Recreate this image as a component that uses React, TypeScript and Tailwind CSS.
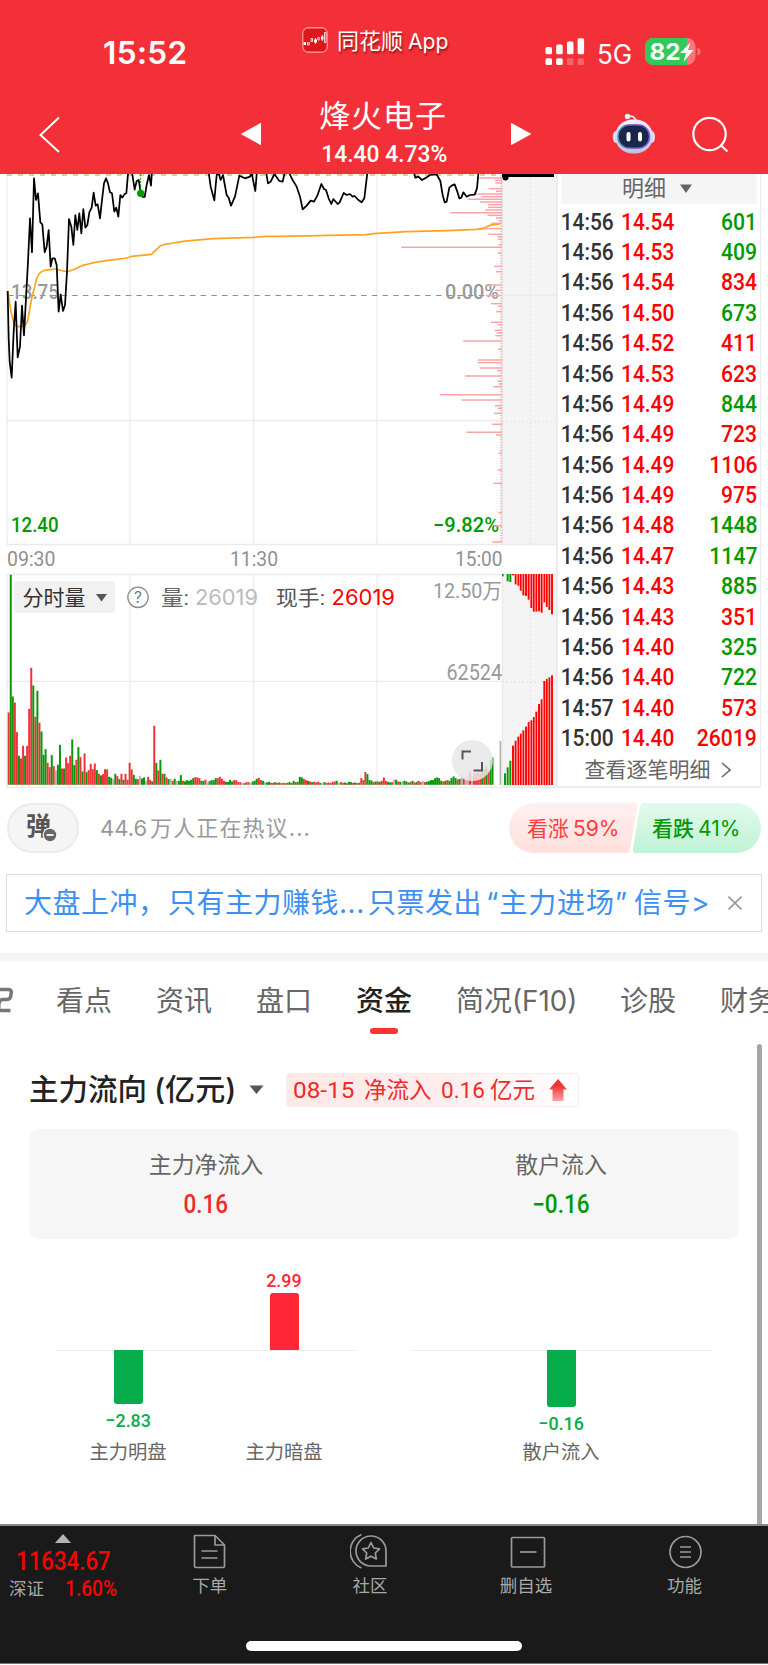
import React from "react";

const RED = "#ff0000";
const GREEN = "#009900";

const priceSegments: string[] = [
  "23,378 26,520 29,590 35,638 41,500 47,410 53,577 60,545 66,422 72,511 78,400 84,290 90,160 96,262 102,40 108,105 114,85 121,172 127,178 134,262 140,245 146,195 152,305 157,280 164,280 170,300 176,440 182,388 189,438 195,420 201,320 207,162 214,185 220,240 226,150 232,195 238,145 244,205 250,132 256,188 262,180 268,142 275,128 281,83 287,122 293,118 300,160 306,105 312,55 318,40 324,55 330,82 336,85 343,140 349,128 355,155 361,90 367,98 373,88 379,85 385,15",
  "395,15 404,74 410,48 416,45 422,80 428,96 434,96 440,60 447,30 453,62 456,15",
  "625,15 632,65 643,106 650,30 656,25 662,45 669,30 680,90 686,98 693,122 705,95 718,32 735,40 750,35 755,25 766,78 771,15",
  "798,20 804,55 812,50 822,30 827,20",
  "824,28 838,48 848,50 855,20",
  "866,20 876,42 890,65 900,95 908,133 920,122 932,107 942,110 952,92 964,57 972,72 978,75 986,100 994,117 1000,102 1013,117 1019,112 1031,84 1040,90 1050,87 1058,95 1064,93 1075,105 1085,112 1093,100 1103,15",
  "1241,20 1246,38 1255,35 1266,45 1278,38 1290,30 1310,28 1321,48 1328,90 1334,112 1340,110 1348,68 1355,62 1364,58 1372,80 1378,100 1384,98 1390,82 1400,95 1410,90 1424,89 1431,70 1436,15",
];

const averageLine =
  "23,378 33,440 42,478 55,485 75,483 83,467 95,400 103,370 110,340 118,325 130,317 150,314 165,312 190,318 203,320 225,312 245,302 265,297 285,292 320,287 350,283 380,279 395,274 455,268 460,262 470,253 480,243 495,238 520,234 550,229 580,226 640,221 760,217 800,214 840,214 1100,209 1120,206 1220,200 1340,197 1430,193 1450,190 1470,181 1480,179 1500,177";

const chips: [number, number][] = [
  [39, 628], [46, 675], [54, 676], [71, 656], [79, 678], [87, 615], [95, 634], [103, 595], [111, 630], [119, 654],
  [127, 654], [135, 646], [143, 541], [151, 652], [159, 678], [167, 686], [175, 664], [191, 628], [208, 655], [215, 682],
  [223, 684], [239, 686], [247, 394], [264, 684], [304, 672], [320, 678], [360, 650], [376, 675], [392, 648], [416, 663],
  [424, 684], [440, 679], [472, 663], [480, 684], [496, 674], [504, 680], [512, 676], [528, 580], [553, 685], [585, 624],
  [593, 624], [609, 629], [617, 681], [633, 585], [649, 682], [657, 686], [665, 670], [689, 509], [705, 575], [722, 675],
  [730, 682], [745, 672], [778, 667], [802, 589], [810, 678], [857, 690], [865, 686], [915, 683], [955, 670], [1043, 685],
  [1083, 672], [1131, 667],
];

const volumes =
  "r217 g630 g265 r247 r158 g87 r79 r117 g87 r117 r228 r351 g298 r204 g282 r186 g160 g90 g107 r66 r53 g89 r56 a43 g60 g120 r49 g49 r82 r65 r87 g136 g59 r75 g113 r83 g40 r94 g38 r44 r63 r47 r64 g44 r33 g28 r32 r47 r46 g24 g21 a17 g33 r26 g17 r33 g15 r33 r15 r66 r46 g30 g18 r17 a27 g19 g22 a12 r24 r15 g10 r177 g66 r43 g75 r33 g33 r22 g17 a18 r12 g18 a12 g12 g29 r12 g10 g14 g12 g15 g20 r23 r22 r20 g12 g12 r15 a8 g11 g14 g14 g20 r20 r24 r18 r12 g9 g9 g15 g10 r14 r14 r8 r8 a6 g5 r8 r8 a5 g10 g12 g18 r21 r14 g12 a8 g7 g9 r6 r6 g8 r6 g7 r5 r6 r5 g6 g8 r6 g12 g8 r9 g24 g22 r18 r14 g12 r10 g8 r9 r7 r9 g6 a5 g8 r6 r7 g5 r9 r10 g12 a6 r8 r6 g7 r5 g9 g8 r6 g7 r5 g6 r20 r14 r38 g32 g14 g13 r8 g10 r10 g9 r12 r22 r12 g9 g7 r8 a16 g15 r10 g9 a10 g12 g10 g7 r9 g12 r7 g9 r12 r8 a12 r8 g9 g11 g14 g14 g20 g22 g20 g12 r10 g12 r14 g12 g20 g25 g20 r16 g18 a32 r22 a18 a28 r40 a25 r36 r34 r38 r34 g40 r48 g55 r42 g75 g82"
    .split(" ");

const fills: Record<string, string> = { r: "#f03338", g: "#0b960b", a: "#b3b3b3" };

const depthX = [645, 653, 661, 669, 677, 685, 692.5, 700, 708, 716, 724, 731.5, 739, 747, 755, 763, 770.5, 778, 786];
const depthLow = [700, 682, 662, 617, 602, 590, 581, 571, 560, 546, 541, 531, 515, 492, 478, 423, 417, 412, 406];
const depthHigh = [102, 124, 126, 106, 133, 137, 152, 166, 168, 179, 204, 215, 215, 214, 218, 187, 201, 210, 223];

const trades: [string, string, string, boolean][] = [
  ["14:56", "14.54", "601", false],
  ["14:56", "14.53", "409", false],
  ["14:56", "14.54", "834", true],
  ["14:56", "14.50", "673", false],
  ["14:56", "14.52", "411", true],
  ["14:56", "14.53", "623", true],
  ["14:56", "14.49", "844", false],
  ["14:56", "14.49", "723", true],
  ["14:56", "14.49", "1106", true],
  ["14:56", "14.49", "975", true],
  ["14:56", "14.48", "1448", false],
  ["14:56", "14.47", "1147", false],
  ["14:56", "14.43", "885", false],
  ["14:56", "14.43", "351", true],
  ["14:56", "14.40", "325", false],
  ["14:56", "14.40", "722", false],
  ["14:57", "14.40", "573", true],
  ["15:00", "14.40", "26019", true],
];

function Label({ x, y, w, size, fill, children, font = "Roboto", weight = 500 }: {
  x: number; y: number; w: number; size: number; fill: string; children: string; font?: string; weight?: number;
}) {
  return (
    <text x={x} y={y} textLength={w} lengthAdjust="spacingAndGlyphs" fontSize={size} fill={fill}
      fontFamily={`${font}, "Noto Sans CJK SC", sans-serif`} fontWeight={weight}>
      {children}
    </text>
  );
}

function Header() {
  return (
    <header className="flex h-[174px] flex-col bg-[#f33038] text-white">
      <div className="flex h-[92px] items-start">
        <div className="ml-[103px] mt-[38px] w-[199px] text-[31.500px] font-semibold leading-[30px] tracking-[0.400px]">15:52</div>
        <svg className="mt-[27px]" width="26" height="26" viewBox="0 0 26 26">
          <rect x="0.75" y="0.75" width="24.5" height="24.5" rx="5.5" fill="#e0161e" stroke="#ff8f92" strokeWidth="1.3" />
          <path d="M1.500 16.500h2.500M12 14h3M19 11h2.500" stroke="#fff" strokeWidth="3.200" />
          <path d="M5.500 15.500h1.800v2.500h-1.800zM9 11.500h1.500v3h-1.500zM15.800 10.500h1.500v2.500h-1.500zM22.500 5.500h1.500v10h-1.500zM13.500 11v6M20.300 8v6" stroke="#fff" strokeWidth="0.8" fill="none" />
        </svg>
        <div className="ml-[9px] mt-[29px] flex w-[208px] items-center gap-[5px] whitespace-nowrap text-[22px] leading-[24px] [text-shadow:1px_2px_2px_rgba(90,0,0,0.6)]">
          <span>同花顺</span><span className="origin-left scale-x-[0.960]">App</span>
        </div>
        <svg className="mt-[38px]" width="40" height="28" viewBox="0 0 40 28" fill="#fff">
          <rect x="0.5" y="9" width="6.500" height="7.300" rx="1.500" />
          <rect x="11.200" y="6.500" width="6.500" height="9.800" rx="1.500" />
          <rect x="22" y="3.500" width="6.500" height="12.800" rx="1.500" />
          <rect x="32.600" y="0.300" width="6.500" height="16" rx="1.500" />
          <rect x="0.500" y="20.200" width="6.500" height="6.800" rx="1.500" />
          <rect x="11.200" y="20.200" width="6.500" height="6.800" rx="1.500" />
          <rect x="22" y="20.200" width="6.500" height="6.800" rx="1.500" opacity="0.25" />
          <rect x="32.600" y="20.200" width="6.500" height="6.800" rx="1.500" opacity="0.25" />
        </svg>
        <div className="ml-[12px] mt-[40px] w-[48px] text-[26.500px] leading-[28px]"><span className="inline-block origin-left scale-x-[0.980]">5G</span></div>
        <svg className="mt-[38px]" width="56" height="27" viewBox="0 0 56 27">
          <clipPath id="battery"><rect width="50.500" height="27" rx="8.500" /></clipPath>
          <g clipPath="url(#battery)">
            <rect width="51" height="27" fill="#f9767b" />
            <rect width="42" height="27" fill="#34c759" />
          </g>
          <path d="M52.500 9.500q3 1 3 4t-3 4z" fill="#f9767b" />
          <text x="4.500" y="21.800" textLength="31" lengthAdjust="spacingAndGlyphs" fontFamily="Inter" fontWeight="700" fontSize="23.500" fill="#fff">82</text>
          <path d="M45.500 4.500L35 15h6l-2.500 9L48.500 12h-5.500z" fill="#fff" />
        </svg>
      </div>
      <div className="flex h-[82px] items-start">
        <svg className="ml-[38px] mt-[23px]" width="24" height="40" viewBox="0 0 24 40" fill="none" stroke="#fff" strokeWidth="2"><path d="M21 2.500L2.500 20L21 37" /></svg>
        <svg className="ml-[178px] mt-[30px]" width="22" height="24" viewBox="0 0 22 24"><path d="M0.800 12L21 0.800V23.200z" fill="#fff" /></svg>
        <div className="flex w-[247px] flex-col items-center">
          <div className="mt-[8px] whitespace-nowrap pr-[5px] text-[31px] leading-[32px] tracking-[0.900px]">烽火电子</div>
          <div className="mt-[9px] origin-center scale-x-[0.950] whitespace-nowrap pr-[2px] font-[Roboto] text-[24px] font-medium leading-[26px]">14.40 4.73%</div>
        </div>
        <svg className="ml-px mt-[30px]" width="22" height="24" viewBox="0 0 22 24"><path d="M21.500 12L1 0.800V23.200z" fill="#fff" /></svg>
        <svg className="ml-[79px] mt-[20px]" width="46" height="44" viewBox="0 0 46 44">
          <defs>
            <linearGradient id="shell" x1="0" y1="0" x2="0" y2="1"><stop offset="0" stopColor="#f1f3fb" /><stop offset="1" stopColor="#bcc3df" /></linearGradient>
            <linearGradient id="visor"><stop offset="0" stopColor="#4f95b8" /><stop offset="0.500" stopColor="#7b3fb8" /><stop offset="1" stopColor="#7c5cf0" /></linearGradient>
          </defs>
          <path d="M17 4.500q7-1.500 8 5" stroke="#dfe3f2" strokeWidth="1.800" fill="none" />
          <circle cx="16.500" cy="4.500" r="2.700" fill="#e9ecf7" />
          <ellipse cx="5" cy="25" rx="3.300" ry="6" fill="#dce0f0" />
          <ellipse cx="40.700" cy="25" rx="3.300" ry="6" fill="#dce0f0" />
          <rect x="4" y="7.500" width="38" height="34" rx="18" fill="url(#shell)" />
          <rect x="7" y="13" width="31.500" height="23" rx="11" fill="#19274a" stroke="url(#visor)" strokeWidth="1.500" />
          <rect x="15.500" y="20" width="4" height="9.500" rx="2" fill="#fff" />
          <rect x="27" y="20" width="4" height="9.500" rx="2" fill="#fff" />
        </svg>
        <svg className="ml-[34px] mt-[23px]" width="40" height="40" viewBox="0 0 40 40" fill="none" stroke="#fff" strokeWidth="2.200"><circle cx="18.500" cy="19" r="16.200" /><path d="M29.500 30l7 6.500" /></svg>
      </div>
    </header>
  );
}

function PriceChart() {
  return (
    <svg className="block" width="557" height="372" viewBox="0 174 557 372">
      <rect x="502.500" y="174" width="54.500" height="371" fill="#f4f4f4" />
      <g stroke="#ebebeb" strokeWidth="1.300" fill="none">
        <path d="M7 174V545M130 174V545M253.500 174V545M377 174V545M502.500 174V545M7 420.500H502M7 544.500H557M502 295.500H557" />
        <path d="M530.500 174V545M502 421.500H557" strokeDasharray="2 2" stroke="#e6e6e6" />
      </g>
      <path d="M7 175H502" stroke="#e0b878" strokeWidth="1.500" strokeDasharray="5 6" />
      <path d="M8 295.500H502" stroke="#8f8f8f" strokeWidth="1.100" strokeDasharray="5.500 5.200" />
      <Label x={11} y={299} w={48} size={20.500} fill="#999">13.75</Label>
      <Label x={445} y={299} w={54} size={20.500} fill="#999">0.00%</Label>
      <Label x={11} y={532} w={47.500} size={20.500} fill={GREEN}>12.40</Label>
      <Label x={433} y={532} w={66} size={20.500} fill={GREEN}>−9.82%</Label>
      <g transform="translate(270 165) scale(0.33333)" stroke="#f8a5a7" strokeWidth="4.500">
        {chips.map(([y, x]) => <path key={y} d={`M${x} ${y}H696`} />)}
        <path d="M694 30V1134" strokeDasharray="4 4" strokeWidth="5" />
      </g>
      <g transform="translate(0 165) scale(0.33333)" fill="none" strokeLinejoin="round">
        <polyline points={averageLine} stroke="#ffa21f" strokeWidth="5" />
        {priceSegments.map((p) => <polyline key={p} points={p} stroke="#000" strokeWidth="5.200" />)}
        <path d="M422 28V80" stroke={GREEN} strokeWidth="3" strokeDasharray="6 4" />
        <circle cx="422" cy="85" r="11" fill={GREEN} />
      </g>
      <path d="M502 175.500H554" stroke="#000" strokeWidth="3" />
      <circle cx="505.500" cy="177.500" r="3" />
    </svg>
  );
}

function VolumeChart() {
  return (
    <svg className="block" width="557" height="216" viewBox="0 573 557 216">
      <rect x="502.500" y="574" width="54.500" height="213" fill="#f4f4f4" />
      <g stroke="#ebebeb" strokeWidth="1.300" fill="none">
        <path d="M7 574V788M130 574V788M253.500 574V788M377 574V788M502.500 574V788M7 574.500H557M7 681.300H502M7 787.500H557" />
        <path d="M530.500 574V787M502 682H557" strokeDasharray="2 2" stroke="#e6e6e6" />
      </g>
      {volumes.map((v, i) => {
        const h = Number(v.slice(1)) / 3;
        return <rect key={i} x={7.700 + i * 2.050} y={784.800 - h} width={2} height={h} fill={fills[v[0]]} />;
      })}
      <rect x="499.600" y="741" width="1.700" height="44" fill="#b0b0b0" />
      <g transform="translate(290 540) scale(0.33333)">
        {depthX.map((x, i) => (
          <g key={x} fill={i < 3 ? GREEN : RED}>
            <rect x={x - 2.900} y={depthLow[i]} width="5.800" height={735 - depthLow[i]} />
            <rect x={x - 2.900} y={102} width="5.800" height={depthHigh[i] - 102} />
            {i > 3 && <rect x={x - 4.800} y={depthLow[i - 1]} width="2" height={735 - depthLow[i - 1]} fill="#ff9a9a" />}
            {i > 3 && <rect x={x - 4.800} y={102} width="2" height={Math.min(depthHigh[i - 1], depthHigh[i]) - 102} fill="#ff9a9a" />}
          </g>
        ))}
        <rect x="636" y="102" width="5" height="7" fill={GREEN} />
      </g>
      <rect x="14" y="581" width="101" height="32" rx="3" fill="#f1f1f1" />
      <Label x={22.500} y={604.500} w={63} size={21} fill="#333" weight={400}>分时量</Label>
      <path d="M96 594h11l-5.500 7.500z" fill="#555" />
      <circle cx="138" cy="597.300" r="10.200" fill="none" stroke="#8a8a8a" strokeWidth="1.300" />
      <text x="138" y="602.800" textAnchor="middle" fontFamily="Inter" fontSize="15.500" fill="#777">?</text>
      <Label x={161} y={604.500} w={28} size={21} fill="#666" weight={400}>量:</Label>
      <Label x={195} y={604.800} w={63} size={22} fill="#bbb" font="Inter" weight={400}>26019</Label>
      <Label x={276} y={604.500} w={49} size={21} fill="#555" weight={400}>现手:</Label>
      <Label x={331.500} y={604.800} w={63.500} size={22} fill={RED} font="Inter" weight={400}>26019</Label>
      <Label x={433} y={598} w={69} size={21} fill="#999" weight={400}>12.50万</Label>
      <Label x={446.500} y={679.500} w={55.500} size={21.500} fill="#999" weight={400}>62524</Label>
      <circle cx="472.300" cy="760.500" r="20.500" fill="#e8e8e8" fillOpacity="0.850" />
      <path d="M462.500 759.500V751.500H471M482 762V770.500H473.500" fill="none" stroke="#555" strokeWidth="2" />
    </svg>
  );
}

function Trades() {
  return (
    <section className="flex h-[614px] w-[205px] flex-col border-b-2 border-l-2 border-r-[1.500px] border-[#ececec]">
      <div className="ml-[3px] mr-[3px] flex h-[30px] items-center justify-center bg-[#f5f5f5] pr-[3px] text-[22px] leading-none text-[#666]">
        <span className="-mt-[2px]">明细</span>
        <svg className="ml-[13px]" width="14" height="10" viewBox="0 0 14 10"><path d="M1 0.500h12L7 9z" fill="#666" /></svg>
      </div>
      <ul className="mt-[3.200px] font-[Roboto] text-[23.500px] font-medium leading-none">
        {trades.map(([time, price, size, up], i) => (
          <li key={i} className="flex h-[30.380px] items-center pr-[3px]">
            <span className="w-[63px] shrink-0 origin-left scale-x-[0.890] pl-[3px] text-[#333]">{time}</span>
            <span className="w-[60px] shrink-0 origin-left scale-x-[0.890] text-[#ff0000]">{price}</span>
            <span className={`ml-auto origin-right scale-x-[0.900] ${up ? "text-[#ff0000]" : "text-[#009900]"}`}>{size}</span>
          </li>
        ))}
      </ul>
      <div className="flex flex-1 items-center justify-center pr-[3px] text-[21px] leading-none text-[#666]">
        查看逐笔明细
        <svg className="ml-[10px]" width="10" height="16" viewBox="0 0 10 16" fill="none" stroke="#666" strokeWidth="1.600"><path d="M1 1l8 7-8 7" /></svg>
      </div>
    </section>
  );
}

function Market() {
  return (
    <div className="flex h-[615px]">
      <div className="flex w-[556px] shrink-0 flex-col">
        <PriceChart />
        <div className="flex h-[27px] items-center font-[Roboto] text-[20.500px] leading-none text-[#909090]">
          <span className="ml-[7px] w-[223px] origin-left scale-x-[0.950]">09:30</span>
          <span className="w-[225px] origin-left scale-x-[0.940]">11:30</span>
          <span className="origin-left scale-x-[0.930]">15:00</span>
        </div>
        <VolumeChart />
      </div>
      <Trades />
    </div>
  );
}

function Sentiment() {
  return (
    <div className="flex h-[50px] items-center pl-[7px]">
      <div className="flex h-[50px] w-[72px] items-center justify-center rounded-full border-2 border-[#ebebeb] bg-[#f5f5f5]">
        <svg width="36" height="40" viewBox="0 0 36 40">
          <text x="1" y="26.500" fontFamily="Noto Sans CJK SC" fontWeight="700" fontSize="25" fill="#555">弹</text>
          <circle cx="25" cy="27" r="7.500" fill="#f5f5f5" /><circle cx="25" cy="27" r="6.200" fill="#666" />
          <path d="M21.500 27h7" stroke="#fff" strokeWidth="1.800" />
        </svg>
      </div>
      <div className="ml-[21px] flex w-[409px] items-center whitespace-nowrap text-[22px] leading-none text-[#999]">
        <span>44.6</span><span className="ml-[3px] tracking-[1.100px]">万人正在热议...</span>
      </div>
      <div className="relative flex h-[50px] w-[252px] items-center">
        <svg className="absolute inset-0" width="252" height="50" viewBox="0 0 252 50">
          <defs>
            <linearGradient id="bull" x1="0" y1="0" x2="0" y2="1"><stop offset="0" stopColor="#fff0f0" /><stop offset="1" stopColor="#ffe0dd" /></linearGradient>
            <linearGradient id="bear" x1="0" y1="0" x2="0" y2="1"><stop offset="0" stopColor="#e2faec" /><stop offset="1" stopColor="#c0f2d6" /></linearGradient>
          </defs>
          <path d="M25 0H125Q129 0 128 4L121 46Q120 50 116 50H25A25 25 0 0 1 25 0Z" fill="url(#bull)" />
          <path d="M136 0H227A25 25 0 0 1 227 50H128Q123 50 124 46L131 4Q132 0 136 0Z" fill="url(#bear)" />
        </svg>
        <div className="relative ml-[18px] flex w-[125px] items-center gap-[4px] whitespace-nowrap text-[21px] leading-none text-[#ff3b3b]"><span>看涨</span><span>59%</span></div>
        <div className="relative flex items-center gap-[4px] whitespace-nowrap text-[21px] font-medium leading-none text-[#009900]"><span>看跌</span><span className="font-normal">41%</span></div>
      </div>
    </div>
  );
}

function Banner() {
  return (
    <div className="ml-[6px] mr-[6px] flex h-[58px] items-center whitespace-nowrap border-[1.500px] border-[#dcdcdc] text-[28px] leading-none tracking-[0.500px] text-[#3d90f3]">
      <span className="ml-[17px] w-[144px]">大盘上冲，</span>
      <span className="w-[171px]">只有主力赚钱</span>
      <span className="w-[29px]">...</span>
      <span className="w-[118px]">只票发出</span>
      <span className="w-[148px] tracking-[0.900px]">“主力进场”</span>
      <span className="w-[85px]">信号&gt;</span>
      <svg className="ml-[9px]" width="14" height="14" viewBox="0 0 14 14" stroke="#999" strokeWidth="1.600"><path d="M0.500 0.500l13 13M13.500 0.500l-13 13" /></svg>
    </div>
  );
}

function Tabs() {
  return (
    <nav className="flex h-[80px] items-start overflow-hidden whitespace-nowrap pt-[25px] text-[28px] leading-[30px] text-[#666]">
      <div className="w-[56px] shrink-0">
        <svg width="14" height="30" viewBox="0 0 14 30" fill="none" stroke="#777" strokeWidth="3.500"><path d="M0 3.500H8Q12 3.500 11.200 7L10.800 10Q10.300 13.500 6.500 13.500H3Q0 13.500 -1 17L-1.500 24.500H10.500" /></svg>
      </div>
      <span className="w-[100px] shrink-0">看点</span>
      <span className="w-[100px] shrink-0">资讯</span>
      <span className="w-[100px] shrink-0">盘口</span>
      <div className="flex w-[100px] shrink-0 flex-col font-medium text-[#222]">
        资金<i className="ml-[14px] mt-[12px] h-[6px] w-[28px] rounded-full bg-[#fb3430]" />
      </div>
      <div className="flex w-[164px] shrink-0">简况<span className="origin-left scale-x-[0.990]">(F10)</span></div>
      <span className="w-[100px] shrink-0">诊股</span>
      <span className="shrink-0">财务</span>
    </nav>
  );
}

function FlowBar({ up, value, label, size }: { up?: boolean; value: string; label: string; size: string }) {
  return (
    <div className="relative flex h-[200px] w-[90px] flex-col items-center">
      <div className="flex h-[86px] flex-col items-center justify-end">
        {up && <span className="mb-[2px] origin-center scale-x-[0.940] font-[Roboto] text-[19px] font-medium leading-[20px] text-[#ff2736]">{value}</span>}
        {up && <div className={`w-[29px] rounded-t-[3px] bg-[#ff2736] ${size}`} />}
      </div>
      {!up && <div className={`w-[29px] rounded-b-[3px] bg-[#07ac4b] ${size}`} />}
      {!up && <span className="mt-[7px] origin-center scale-x-[0.940] font-[Roboto] text-[19px] font-medium leading-[20px] text-[#07ac4b]">{value}</span>}
      <span className="mt-auto whitespace-nowrap text-[19.300px] leading-[24px] text-[#666]">{label}</span>
    </div>
  );
}

function Funds() {
  return (
    <section className="flex h-[483px] justify-between pr-[6px]">
      <div className="ml-[29px] w-[710px]">
        <div className="mt-[32px] flex h-[34px] items-center">
          <h2 className="w-[220px] whitespace-nowrap text-[29.500px] font-medium leading-none text-[#222]">主力流向<span className="ml-[7px] inline-block origin-left scale-x-[1.020]">(亿元)</span></h2>
          <svg width="15" height="10" viewBox="0 0 15 10"><path d="M0.500 0.500h14l-7 8.500z" fill="#555" /></svg>
          <div className="ml-[22px] flex h-[34px] w-[293px] items-center whitespace-nowrap rounded-[3px] border border-[#ffeaea] bg-gradient-to-r from-[#ffe8e8] via-[#ffecec] to-white pl-[6px] text-[22.500px] leading-none text-[#ee2a2a]">
            <span className="w-[71px] origin-left scale-x-[1.080] font-[Roboto]">08-15</span>
            <span className="w-[77px]">净流入</span>
            <span className="w-[49px] font-[Roboto]">0.16</span>
            <span>亿元</span>
            <svg className="ml-[13px]" width="20" height="24" viewBox="0 0 20 24">
              <defs><linearGradient id="up" x1="0" y1="0" x2="0" y2="1"><stop offset="0.300" stopColor="#ee3535" /><stop offset="1" stopColor="#ee3535" stopOpacity="0.450" /></linearGradient></defs>
              <path d="M10 1L19 11.500H15.500V23H4.500V11.500H1Z" fill="url(#up)" />
            </svg>
          </div>
        </div>
        <div className="mt-[22px] grid h-[110px] grid-cols-2 rounded-[10px] bg-[#f6f6f6] text-center">
          {[["主力净流入", "0.16", "text-[#ee2a2a]"], ["散户流入", "−0.16", "text-[#009900]"]].map(([name, value, color]) => (
            <div key={name} className="flex flex-col items-center pr-[1px] pt-[22px]">
              <span className="text-[22.900px] leading-[28px] text-[#666]">{name}</span>
              <span className={`mt-[12px] origin-center scale-x-[0.900] font-[Roboto] text-[25px] font-medium leading-[28px] ${color}`}>{value}</span>
            </div>
          ))}
        </div>
        <div className="mt-[25px] flex gap-[58px] px-[28px]">
          <div className="relative flex w-[298px] justify-between pl-[26px] pr-[26px]">
            <i className="absolute inset-x-0 top-[86px] h-px bg-[#eaeaea]" />
            <FlowBar value="−2.83" label="主力明盘" size="h-[54px]" />
            <FlowBar up value="2.99" label="主力暗盘" size="h-[57px]" />
          </div>
          <div className="relative flex w-[298px] justify-center pr-[2px]">
            <i className="absolute inset-x-0 top-[86px] h-px bg-[#eaeaea]" />
            <FlowBar value="−0.16" label="散户流入" size="h-[57px]" />
          </div>
        </div>
      </div>
      <div className="mt-[3px] w-[5px] rounded-t-full bg-[#a6a6a6]" />
    </section>
  );
}

function NavItem({ label, width, children }: { label: string; width: string; children: React.ReactNode }) {
  return (
    <div className={`flex flex-col items-center pt-[7px] ${width}`}>
      <svg width="40" height="38" viewBox="0 0 40 38" fill="none" stroke="#9a9a9a" strokeWidth="1.700" strokeLinejoin="round">{children}</svg>
      <span className="mt-[4px] whitespace-nowrap text-[17.500px] leading-[22px] text-[#a8a8a8]">{label}</span>
    </div>
  );
}

function BottomBar() {
  return (
    <footer className="flex h-[140px] flex-col border-b border-t-2 border-b-[#777] border-t-[#8a8a8a] bg-[#1a1a1a]">
      <div className="flex h-[115px]">
        <div className="w-[131px]">
          <svg className="ml-[55px] mt-[8px] block" width="16" height="9" viewBox="0 0 16 9"><path d="M0 9L8 0L16 9z" fill="#b4b4b4" /></svg>
          <div className="mt-[6px] origin-left scale-x-[0.890] whitespace-nowrap pl-[18px] font-[Roboto] text-[25px] font-medium leading-[26px] text-[#ff0000]">11634.67</div>
          <div className="mt-[2px] flex items-center pl-[9px] leading-[24px]">
            <span className="w-[56px] text-[17.500px] text-[#a8a8a8]">深证</span>
            <span className="origin-left scale-x-[0.890] font-[Roboto] text-[21.500px] font-medium text-[#ff0000]">1.60%</span>
          </div>
        </div>
        <NavItem label="下单" width="w-[160px]">
          <path d="M5 3H25.500L35 12.500V33.500Q35 35 33.500 35H6.500Q5 35 5 33.500ZM25.500 3V12.500H35M12 18.500H28M12 25.500H28" transform="translate(-0.500 -0.500)" />
        </NavItem>
        <NavItem label="社区" width="w-[163px]">
          <path d="M11.500 1.500A18 18 0 0 0 11.500 35M36 33H21A15 15 0 1 1 36 18Z" />
          <path d="M21 9.500L23.700 15L29.500 15.800L25.300 20L26.300 26L21 23.200L15.700 26L16.700 20L12.500 15.800L18.300 15Z" />
        </NavItem>
        <NavItem label="删自选" width="w-[151px]"><rect x="5.500" y="4.500" width="33" height="29.500" rx="1" /><path d="M14 19H30.500" /></NavItem>
        <NavItem label="功能" width="w-[168px]"><circle cx="20.500" cy="19" r="15.500" /><path d="M15 14H26M15 19H26M15 24H26" /></NavItem>
      </div>
      <div className="ml-[246px] h-[10px] w-[276px] rounded-full bg-white" />
    </footer>
  );
}

export default function App() {
  return (
    <div className="h-[1665px] w-[768px] overflow-hidden bg-white font-[Inter,'Noto_Sans_CJK_SC',sans-serif]">
      <Header />
      <Market />
      <div className="mt-[14px]"><Sentiment /></div>
      <div className="mt-[21px]"><Banner /></div>
      <div className="mt-[21px] h-[8px] bg-[#f4f4f4]" />
      <Tabs />
      <Funds />
      <BottomBar />
    </div>
  );
}
